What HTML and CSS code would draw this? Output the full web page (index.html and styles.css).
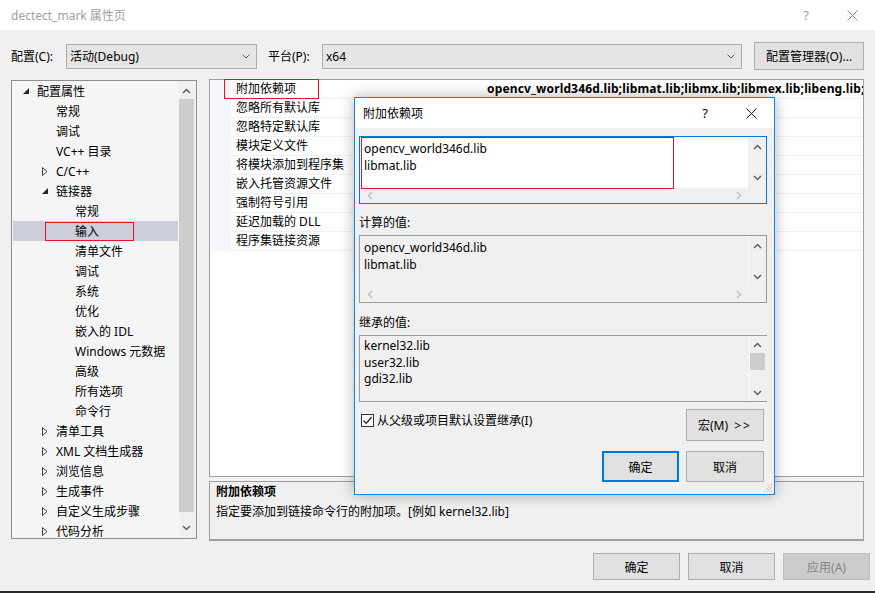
FILE: index.html
```html
<!DOCTYPE html>
<html lang="zh-CN">
<head>
    <meta charset="UTF-8">
    <title>dectect_mark 属性页</title>
    <link rel="stylesheet" href="styles.css">
</head>
<body>
<div class="window">
    <!-- Title bar -->
    <div class="titlebar">
        <span class="title">dectect_mark 属性页</span>
        <span class="cap-btn">?</span>
        <span class="cap-btn">
            <svg width="11" height="11" viewBox="0 0 11 11"><path d="M0.5 0.5L10.5 10.5M10.5 0.5L0.5 10.5" stroke="#8a8a8a" stroke-width="1"/></svg>
        </span>
    </div>

    <!-- Config toolbar -->
    <div class="toolbar">
        <span class="tool-label">配置(C):</span>
        <div class="combo combo-config">
            <span class="combo-text">活动(Debug)</span>
            <svg width="8" height="5" viewBox="0 0 8 5"><path d="M0.5 0.5L4 4L7.5 0.5" fill="none" stroke="#606060"/></svg>
        </div>
        <span class="tool-label tool-label-platform">平台(P):</span>
        <div class="combo combo-platform">
            <span class="combo-text">x64</span>
            <svg width="8" height="5" viewBox="0 0 8 5"><path d="M0.5 0.5L4 4L7.5 0.5" fill="none" stroke="#606060"/></svg>
        </div>
        <button class="btn btn-manager">配置管理器(O)...</button>
    </div>

    <div class="main">
        <!-- Tree -->
        <div class="tree">
            <ul class="tree-list">
                <li class="node lvl1"><span class="exp"><svg width="6" height="6" viewBox="0 0 6 6"><path d="M6 0L6 6L0 6Z" fill="#262626"/></svg></span>配置属性</li>
                <li class="node lvl2"><span class="exp"></span>常规</li>
                <li class="node lvl2"><span class="exp"></span>调试</li>
                <li class="node lvl2"><span class="exp"></span>VC++ 目录</li>
                <li class="node lvl2"><span class="exp"><svg width="6" height="9" viewBox="0 0 6 9"><path d="M0.5 0.5L5 4.5L0.5 8.5Z" fill="none" stroke="#404040"/></svg></span>C/C++</li>
                <li class="node lvl2"><span class="exp"><svg width="6" height="6" viewBox="0 0 6 6"><path d="M6 0L6 6L0 6Z" fill="#262626"/></svg></span>链接器</li>
                <li class="node lvl3"><span class="exp"></span>常规</li>
                <li class="node lvl3 selected"><span class="exp"></span>输入<span class="mark mark-tree"></span></li>
                <li class="node lvl3"><span class="exp"></span>清单文件</li>
                <li class="node lvl3"><span class="exp"></span>调试</li>
                <li class="node lvl3"><span class="exp"></span>系统</li>
                <li class="node lvl3"><span class="exp"></span>优化</li>
                <li class="node lvl3"><span class="exp"></span>嵌入的 IDL</li>
                <li class="node lvl3"><span class="exp"></span>Windows 元数据</li>
                <li class="node lvl3"><span class="exp"></span>高级</li>
                <li class="node lvl3"><span class="exp"></span>所有选项</li>
                <li class="node lvl3"><span class="exp"></span>命令行</li>
                <li class="node lvl2"><span class="exp"><svg width="6" height="9" viewBox="0 0 6 9"><path d="M0.5 0.5L5 4.5L0.5 8.5Z" fill="none" stroke="#404040"/></svg></span>清单工具</li>
                <li class="node lvl2"><span class="exp"><svg width="6" height="9" viewBox="0 0 6 9"><path d="M0.5 0.5L5 4.5L0.5 8.5Z" fill="none" stroke="#404040"/></svg></span>XML 文档生成器</li>
                <li class="node lvl2"><span class="exp"><svg width="6" height="9" viewBox="0 0 6 9"><path d="M0.5 0.5L5 4.5L0.5 8.5Z" fill="none" stroke="#404040"/></svg></span>浏览信息</li>
                <li class="node lvl2"><span class="exp"><svg width="6" height="9" viewBox="0 0 6 9"><path d="M0.5 0.5L5 4.5L0.5 8.5Z" fill="none" stroke="#404040"/></svg></span>生成事件</li>
                <li class="node lvl2"><span class="exp"><svg width="6" height="9" viewBox="0 0 6 9"><path d="M0.5 0.5L5 4.5L0.5 8.5Z" fill="none" stroke="#404040"/></svg></span>自定义生成步骤</li>
                <li class="node lvl2"><span class="exp"><svg width="6" height="9" viewBox="0 0 6 9"><path d="M0.5 0.5L5 4.5L0.5 8.5Z" fill="none" stroke="#404040"/></svg></span>代码分析</li>
            </ul>
            <div class="vscroll tree-scroll">
                <span class="arrow"><svg width="9" height="6" viewBox="0 0 9 6"><path d="M1 5L4.5 1.5L8 5" fill="none" stroke="#606060" stroke-width="1.5"/></svg></span>
                <span class="thumb tree-thumb"></span>
                <span class="arrow"><svg width="9" height="6" viewBox="0 0 9 6"><path d="M1 1L4.5 4.5L8 1" fill="none" stroke="#606060" stroke-width="1.5"/></svg></span>
            </div>
        </div>

        <div class="right">
            <!-- Property grid -->
            <div class="grid">
                <div class="prop-row">
                    <span class="prop-gutter"></span>
                    <span class="prop-name">附加依赖项</span>
                    <span class="prop-value">opencv_world346d.lib;libmat.lib;libmx.lib;libmex.lib;libeng.lib;</span>
                    <span class="mark mark-prop"></span>
                </div>
                <div class="prop-row"><span class="prop-gutter"></span><span class="prop-name">忽略所有默认库</span><span class="prop-value"></span></div>
                <div class="prop-row"><span class="prop-gutter"></span><span class="prop-name">忽略特定默认库</span><span class="prop-value"></span></div>
                <div class="prop-row"><span class="prop-gutter"></span><span class="prop-name">模块定义文件</span><span class="prop-value"></span></div>
                <div class="prop-row"><span class="prop-gutter"></span><span class="prop-name">将模块添加到程序集</span><span class="prop-value"></span></div>
                <div class="prop-row"><span class="prop-gutter"></span><span class="prop-name">嵌入托管资源文件</span><span class="prop-value"></span></div>
                <div class="prop-row"><span class="prop-gutter"></span><span class="prop-name">强制符号引用</span><span class="prop-value"></span></div>
                <div class="prop-row"><span class="prop-gutter"></span><span class="prop-name">延迟加载的 DLL</span><span class="prop-value"></span></div>
                <div class="prop-row"><span class="prop-gutter"></span><span class="prop-name">程序集链接资源</span><span class="prop-value"></span></div>
            </div>

            <!-- Description -->
            <div class="desc">
                <div class="desc-title">附加依赖项</div>
                <div>指定要添加到链接命令行的附加项。[例如 kernel32.lib]</div>
            </div>
        </div>
    </div>

    <div class="footer">
        <button class="btn btn-foot">确定</button>
        <button class="btn btn-foot">取消</button>
        <button class="btn btn-foot btn-disabled">应用(A)</button>
    </div>
    <div class="taskbar"></div>

    <!-- Additional dependencies dialog -->
    <div class="dialog">
        <div class="dlg-title">
            <span class="title dlg-caption">附加依赖项</span>
            <span class="cap-btn">?</span>
            <span class="cap-btn">
                <svg width="11" height="11" viewBox="0 0 11 11"><path d="M0.5 0.5L10.5 10.5M10.5 0.5L0.5 10.5" stroke="#1a1a1a" stroke-width="1"/></svg>
            </span>
        </div>
        <div class="dlg-body">
            <div class="listbox edit">
                <div class="list-text">
                    <div>opencv_world346d.lib</div>
                    <div>libmat.lib</div>
                </div>
                <div class="vscroll">
                    <span class="arrow"><svg width="9" height="6" viewBox="0 0 9 6"><path d="M1 5L4.5 1.5L8 5" fill="none" stroke="#606060" stroke-width="1.5"/></svg></span>
                    <span class="arrow"><svg width="9" height="6" viewBox="0 0 9 6"><path d="M1 1L4.5 4.5L8 1" fill="none" stroke="#606060" stroke-width="1.5"/></svg></span>
                </div>
                <div class="hscroll">
                    <svg width="6" height="9" viewBox="0 0 6 9"><path d="M5 1L1.5 4.5L5 8" fill="none" stroke="#c2c2c2" stroke-width="1.5"/></svg>
                    <svg width="6" height="9" viewBox="0 0 6 9"><path d="M1 1L4.5 4.5L1 8" fill="none" stroke="#c2c2c2" stroke-width="1.5"/></svg>
                </div>
                <div class="corner"></div>
                <span class="mark mark-edit"></span>
            </div>

            <div class="field-label">计算的值:</div>
            <div class="listbox readonly">
                <div class="list-text">
                    <div>opencv_world346d.lib</div>
                    <div>libmat.lib</div>
                </div>
                <div class="vscroll">
                    <span class="arrow"><svg width="9" height="6" viewBox="0 0 9 6"><path d="M1 5L4.5 1.5L8 5" fill="none" stroke="#606060" stroke-width="1.5"/></svg></span>
                    <span class="arrow"><svg width="9" height="6" viewBox="0 0 9 6"><path d="M1 1L4.5 4.5L8 1" fill="none" stroke="#606060" stroke-width="1.5"/></svg></span>
                </div>
                <div class="hscroll">
                    <svg width="6" height="9" viewBox="0 0 6 9"><path d="M5 1L1.5 4.5L5 8" fill="none" stroke="#c2c2c2" stroke-width="1.5"/></svg>
                    <svg width="6" height="9" viewBox="0 0 6 9"><path d="M1 1L4.5 4.5L1 8" fill="none" stroke="#c2c2c2" stroke-width="1.5"/></svg>
                </div>
                <div class="corner"></div>
            </div>

            <div class="field-label field-label-inherit">继承的值:</div>
            <div class="listbox readonly inherit">
                <div class="list-text">
                    <div>kernel32.lib</div>
                    <div>user32.lib</div>
                    <div>gdi32.lib</div>
                </div>
                <div class="vscroll">
                    <span class="arrow arrow-short"><svg width="9" height="6" viewBox="0 0 9 6"><path d="M1 5L4.5 1.5L8 5" fill="none" stroke="#606060" stroke-width="1.5"/></svg></span>
                    <span class="thumb inherit-thumb"></span>
                    <span class="spacer"></span>
                    <span class="arrow arrow-short"><svg width="9" height="6" viewBox="0 0 9 6"><path d="M1 1L4.5 4.5L8 1" fill="none" stroke="#606060" stroke-width="1.5"/></svg></span>
                </div>
            </div>

            <div class="check-row">
                <label class="check">
                    <span class="check-box"><svg width="11" height="11" viewBox="0 0 11 11"><path d="M1.5 5.5L4.2 8.3L9.6 2" fill="none" stroke="#1a1a1a" stroke-width="1.2"/></svg></span>
                    从父级或项目默认设置继承(I)
                </label>
                <button class="btn btn-macro">宏(M) <span class="more">&gt;&gt;</span></button>
            </div>

            <div class="dlg-buttons">
                <button class="btn btn-dlg btn-default">确定</button>
                <button class="btn btn-dlg btn-cancel">取消</button>
            </div>
        </div>
        <svg class="grip" width="11" height="11" viewBox="0 0 11 11">
            <path d="M10 2L2 10M10 5L5 10M10 8L8 10" stroke="#a8a8a8" stroke-width="1" stroke-dasharray="1 1"/>
        </svg>
    </div>
</div>
</body>
</html>
```

FILE: styles.css
```css
* {
    margin: 0;
    padding: 0;
    box-sizing: border-box;
}

body {
    width: 875px;
    height: 593px;
    overflow: hidden;
    background: #f0f0f0;
    color: #000;
    font-family: "Noto Sans", "Noto Sans CJK SC", sans-serif;
    font-size: 12px;
}

.window {
    position: relative;
    height: 593px;
    display: flex;
    flex-direction: column;
}

/* Title bar */
.titlebar {
    height: 30px;
    background: #fff;
    display: flex;
    align-items: center;
    padding-left: 11px;
    color: #a0a0a0;
}

.title {
    flex: 1;
}

.cap-btn {
    width: 46px;
    height: 30px;
    display: flex;
    align-items: center;
    justify-content: center;
    font-size: 13px;
}

/* Toolbar */
.toolbar {
    height: 50px;
    display: flex;
    align-items: center;
    padding: 2px 0 0 11px;
}

.tool-label {
    width: 55px;
}

.tool-label-platform {
    width: 54px;
    margin-left: 11px;
}

.combo {
    height: 25px;
    border: 1px solid #acacac;
    background: #e5e5e5;
    display: flex;
    align-items: center;
    padding: 0 6px 0 3px;
}

.combo-text {
    flex: 1;
}

.combo-config {
    width: 191px;
}

.combo-platform {
    width: 420px;
}

.btn {
    font-family: inherit;
    font-size: 12px;
    color: #000;
    background: #e1e1e1;
    border: 1px solid #adadad;
}

.btn-manager {
    width: 110px;
    height: 28px;
    margin-left: 12px;
}

/* Main area */
.main {
    height: 461px;
    display: flex;
    gap: 12px;
    padding-left: 11px;
}

.tree {
    width: 186px;
    height: 459px;
    border: 1px solid #8e8f91;
    background: #f5f5f5;
    display: flex;
}

.tree-list {
    flex: 1;
    list-style: none;
    overflow: hidden;
}

.node {
    position: relative;
    height: 20px;
    display: flex;
    align-items: center;
    white-space: nowrap;
}

.node.lvl1 { padding-left: 11px; }
.node.lvl2 { padding-left: 30px; }
.node.lvl3 { padding-left: 49px; }

.node.selected {
    background: #cccedb;
    margin: 0 1px;
    padding-left: 48px;
}

.exp {
    width: 14px;
    display: flex;
    align-items: center;
}

.mark {
    position: absolute;
    border: 1px solid #e81123;
}

.mark-tree {
    left: 32px;
    top: 1px;
    width: 89px;
    height: 19px;
}

.vscroll {
    width: 18px;
    background: #f0f0f0;
    display: flex;
    flex-direction: column;
    justify-content: space-between;
    align-items: center;
}

.tree-scroll {
    width: 17px;
    padding-right: 2px;
    align-items: stretch;
}

.arrow {
    height: 20px;
    display: flex;
    align-items: center;
    justify-content: center;
}

.thumb {
    background: #cdcdcd;
}

.tree-thumb {
    flex: 1;
    margin: -2px 0 6px;
}

/* Right column */
.right {
    width: 655px;
    display: flex;
    flex-direction: column;
}

.grid {
    height: 398px;
    margin-top: -1px;
    border: 1px solid #a0a0a0;
    background: #fff;
}

.prop-row {
    position: relative;
    height: 19px;
    display: flex;
}

.prop-gutter {
    width: 21px;
    background: #f5f7fb;
}

.prop-name,
.prop-value {
    line-height: 18px;
    border-bottom: 1px solid #edf0f5;
    white-space: nowrap;
    overflow: hidden;
}

.prop-name {
    width: 252px;
    padding-left: 5px;
}

.prop-value {
    flex: 1;
    padding-left: 4px;
    font-weight: bold;
    letter-spacing: 0.15px;
}

.mark-prop {
    left: 14px;
    top: -1px;
    width: 95px;
    height: 20px;
}

.desc {
    height: 60px;
    margin-top: 4px;
    border: 1px solid #a0a0a0;
    border-bottom: 2px solid #a0a0a0;
    padding: 0 6px;
    line-height: 20px;
}

.desc-title {
    font-weight: bold;
}

/* Footer */
.footer {
    height: 50px;
    display: flex;
    justify-content: flex-end;
    gap: 8px;
    padding: 12px 5px 0 0;
}

.btn-foot {
    width: 87px;
    height: 27px;
}

.btn-disabled {
    background: #cccccc;
    border-color: #bfbfbf;
    color: #838383;
}

.taskbar {
    height: 2px;
    background: #2b2b2b;
}

/* Dialog */
.dialog {
    position: absolute;
    left: 354px;
    top: 97px;
    width: 421px;
    height: 398px;
    border: 1px solid #1a85d6;
    background: #f0f0f0;
    box-shadow: 0 0 14px rgba(0, 0, 0, 0.3);
    display: flex;
    flex-direction: column;
}

.dlg-title {
    height: 30px;
    background: #fff;
    display: flex;
    align-items: center;
    padding-left: 8px;
}

.dlg-caption {
    color: #000;
}

.dlg-body {
    display: flex;
    flex-direction: column;
    padding: 8px 7px 0 4px;
}

.listbox {
    position: relative;
    height: 68px;
    border: 1px solid #999;
    display: grid;
    grid-template-columns: 1fr 18px;
    grid-template-rows: 1fr 15px;
}

.listbox.edit {
    border-color: #0078d7;
}

.list-text {
    padding: 3px 4px 0;
    line-height: 17px;
    background: #fff;
}

.readonly .list-text {
    background: #f0f0f0;
}

.readonly .vscroll {
    border-left: 1px solid #fafafa;
}

.hscroll {
    display: flex;
    justify-content: space-between;
    align-items: center;
    padding: 0 6px 0 7px;
    background: #f0f0f0;
}

.corner {
    background: #f0f0f0;
}

.mark-edit {
    left: 1px;
    top: 0;
    width: 313px;
    height: 52px;
}

.field-label {
    margin-top: 11px;
    line-height: 16px;
}

.field-label-inherit {
    margin-top: 12px;
}

.listbox.inherit {
    height: 67px;
    margin-top: 5px;
    grid-template-columns: 1fr 17px;
    grid-template-rows: 1fr;
}

.field-label + .listbox {
    margin-top: 4px;
}

.inherit .list-text {
    padding-top: 2px;
    line-height: 16.5px;
}

.inherit .vscroll {
    justify-content: flex-start;
    align-items: stretch;
    padding-right: 2px;
}

.arrow-short {
    height: 17px;
}

.inherit-thumb {
    height: 17px;
}

.spacer {
    flex: 1;
}

.check-row {
    margin-top: 7px;
    display: flex;
    justify-content: space-between;
    align-items: flex-start;
}

.check {
    height: 22px;
    display: flex;
    align-items: center;
    gap: 3px;
    padding-left: 2px;
}

.check-box {
    width: 13px;
    height: 13px;
    border: 1px solid #333;
    background: #fff;
    display: flex;
    align-items: center;
    justify-content: center;
}

.btn-macro {
    width: 78px;
    height: 32px;
    margin-right: 3px;
}

.more {
    margin-left: 3px;
    letter-spacing: 2px;
}

.dlg-buttons {
    margin-top: 10px;
    display: flex;
    justify-content: flex-end;
    gap: 7px;
    padding-right: 3px;
}

.btn-dlg {
    height: 31px;
}

.btn-default {
    width: 77px;
    border: 2px solid #0078d7;
}

.btn-cancel {
    width: 78px;
}

.grip {
    position: absolute;
    right: 1px;
    bottom: 1px;
}
```
